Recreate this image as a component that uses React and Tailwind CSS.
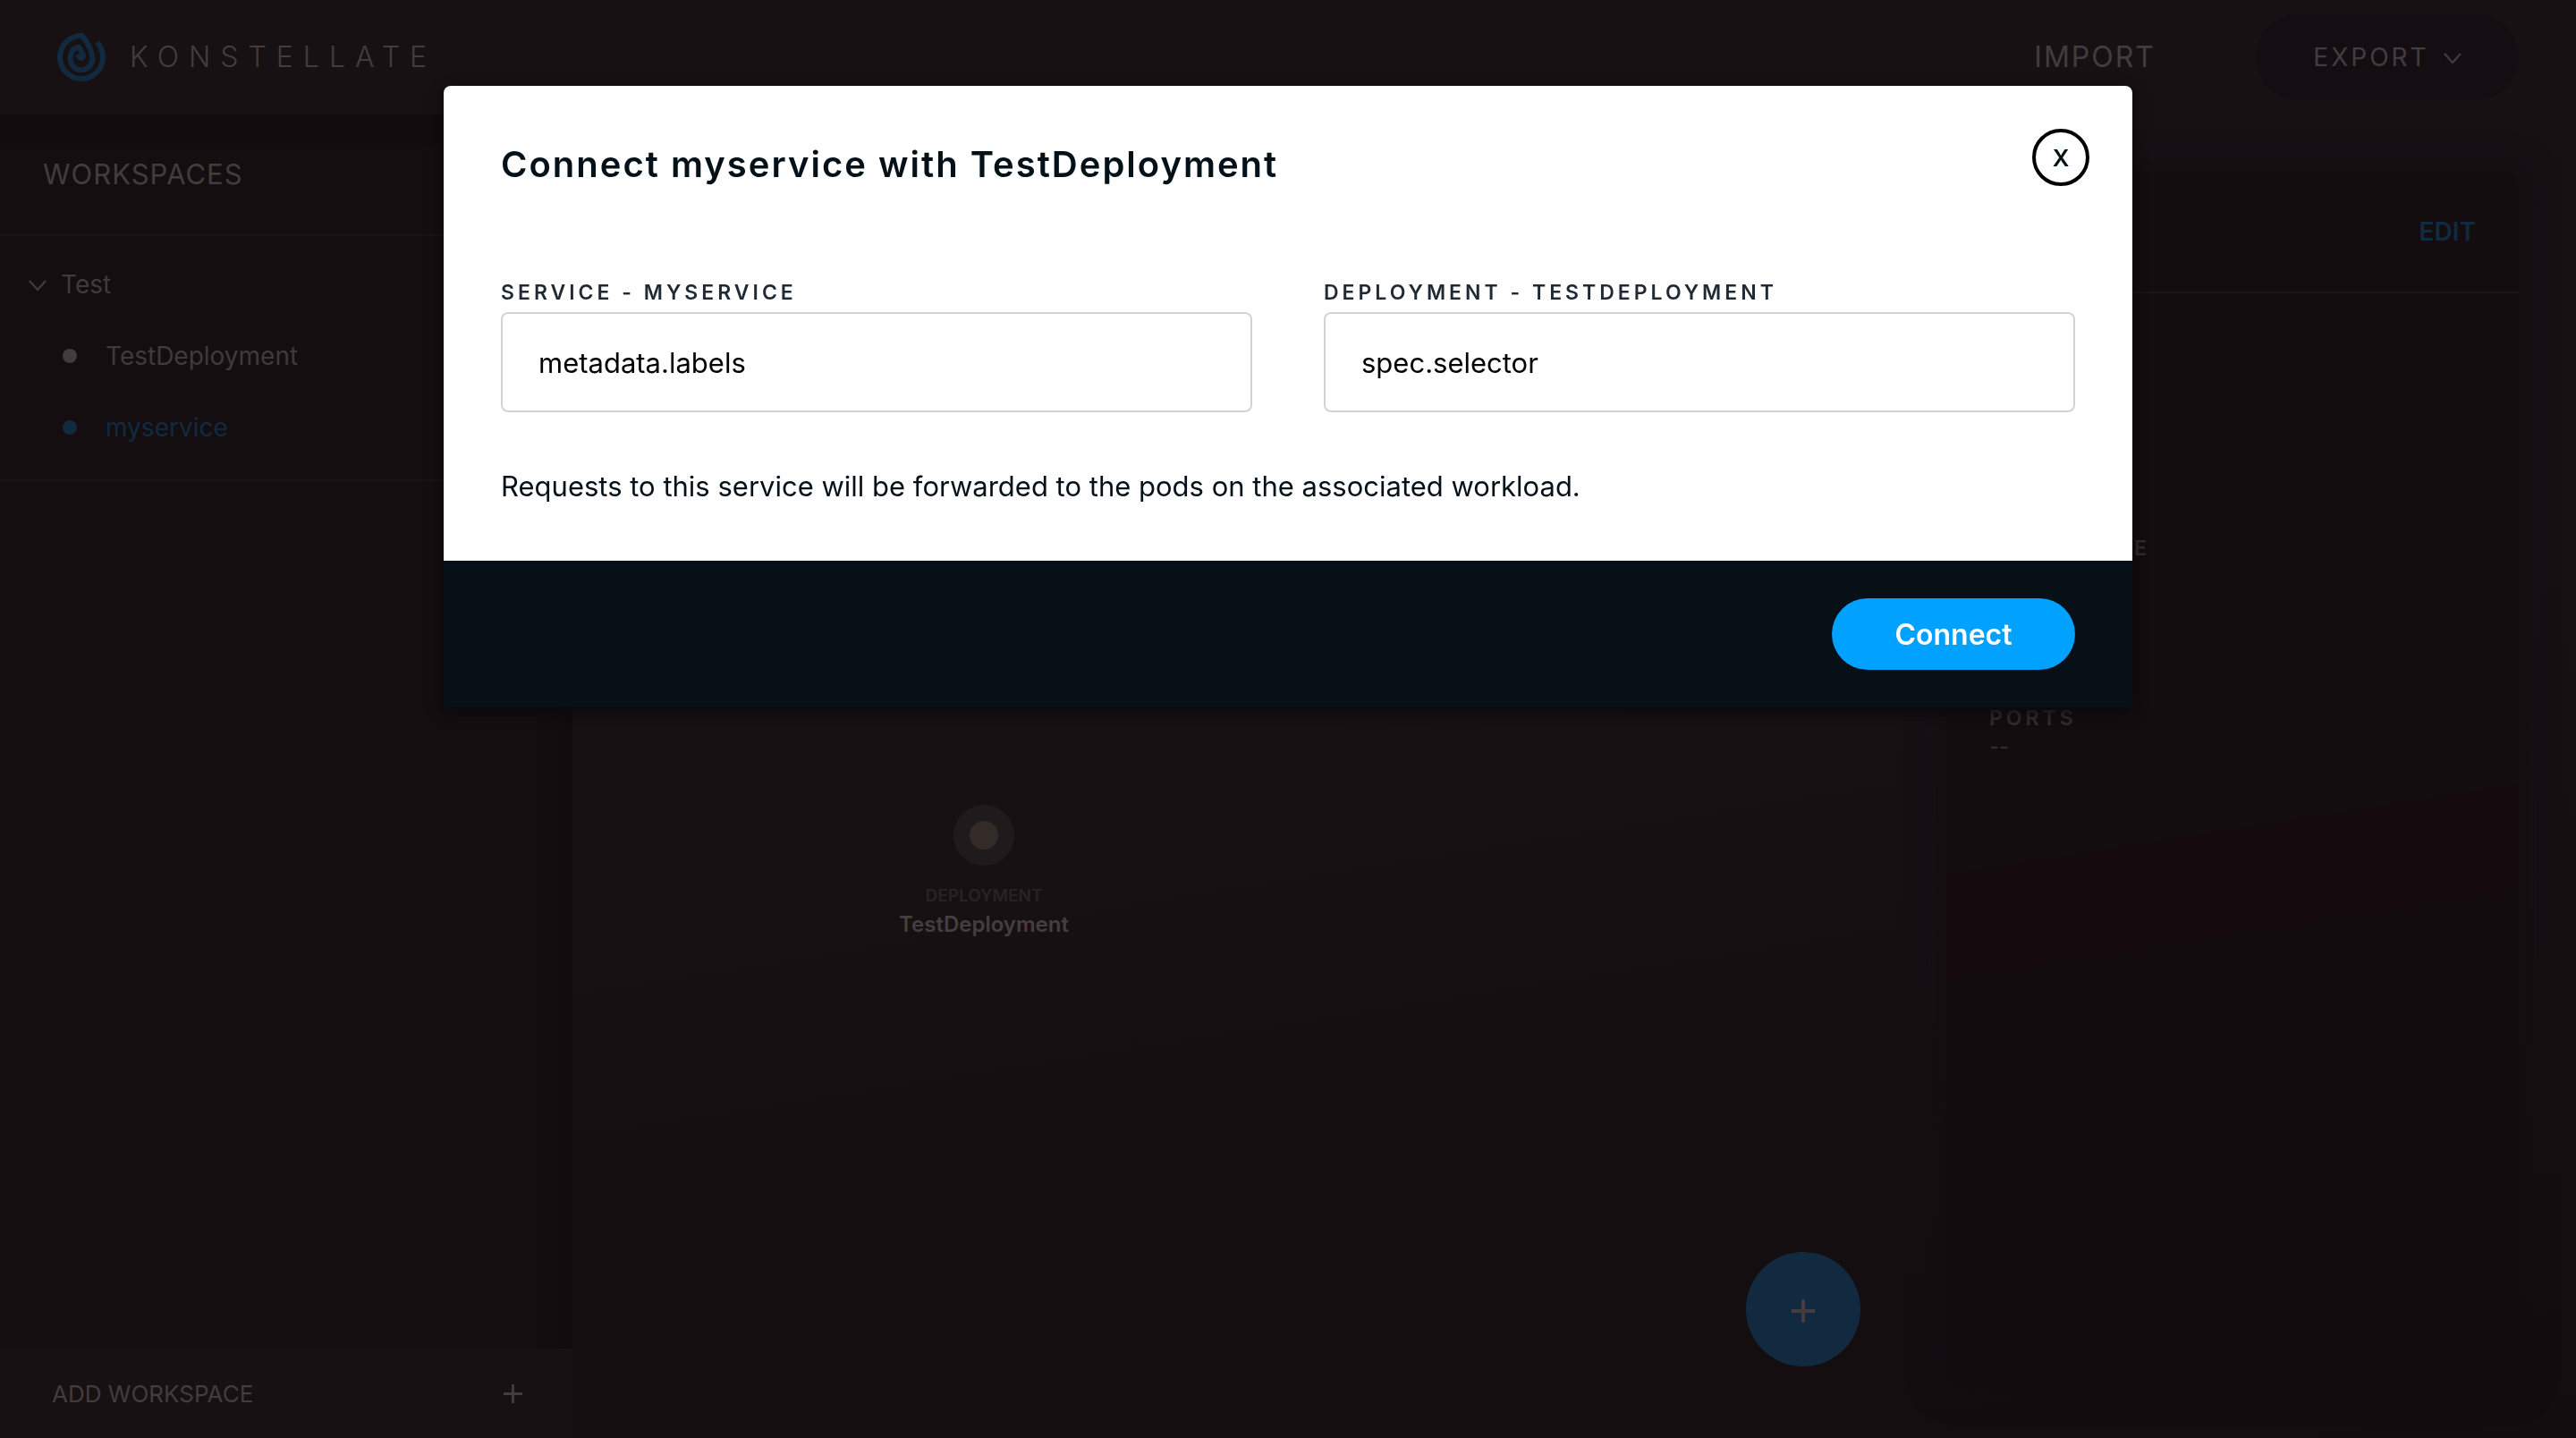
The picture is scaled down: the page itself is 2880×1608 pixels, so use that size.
import { useState } from "react";

function Logo() {
  return (
    <svg className="size-[54px] shrink-0" viewBox="45 51 162 162" fill="none" stroke="#122a40" strokeWidth="18" aria-hidden="true">
      <path d="M179 82 C191 96 198 113 198 132 A72 72 0 1 1 128 60 C139 72 160 104 162 130 A37 37 0 1 1 90 128 C91 112 101 102 117 98 C124 107 133 119 132 128 C130 137 120 137 113 123" />
    </svg>
  );
}

function Chevron() {
  return (
    <svg className="h-4 w-5 shrink-0" viewBox="0 0 20 16" fill="none" stroke="#413a3c" strokeWidth="2.5" aria-hidden="true">
      <path d="M1 4l9 10 9-10" />
    </svg>
  );
}

function Plus({ className, weight }) {
  return (
    <svg className={className} viewBox="0 0 26 26" fill="none" stroke="currentColor" strokeWidth={weight} aria-hidden="true">
      <path d="M13 0v26M0 13h26" />
    </svg>
  );
}

function TopBar() {
  return (
    <header className="flex h-32 items-center justify-between pr-16 pl-16 text-[#433c3e]">
      <div className="flex items-center gap-[27px]">
        <Logo />
        <span className="text-[32px] leading-10 font-light tracking-[11px]">KONSTELLATE</span>
      </div>
      <div className="flex items-center gap-28">
        <button type="button" className="text-[32px] leading-10 tracking-[2px]">IMPORT</button>
        <button type="button" className="flex h-24 w-[294px] items-center justify-center gap-4 rounded-full bg-[#140e12] text-[28px] tracking-[3px]">
          EXPORT
          <Chevron />
        </button>
      </div>
    </header>
  );
}

function SidebarItem({ name, active }) {
  return (
    <li>
      <a
        href="#"
        className={
          active
            ? "flex h-20 items-center gap-8 pl-[70px] text-[28px] text-[#122a40]"
            : "flex h-20 items-center gap-8 pl-[70px] text-[28px] text-[#403a3c]"
        }
      >
        <span className={active ? "size-4 rounded-full bg-[#122a40]" : "size-4 rounded-full bg-[#453a3e]"} />
        {name}
      </a>
    </li>
  );
}

function Sidebar() {
  return (
    <aside className="flex w-[640px] shrink-0 flex-col bg-[#140e11] shadow-[inset_-20px_0_30px_-16px_#110b0e]">
      <h2 className="flex h-[136px] items-center border-b-2 border-[#191316] bg-linear-to-b from-[#120c0f] from-25% to-[#140e11] to-25% pl-12 text-[31px] tracking-[1px] text-[#433c3e]">
        WORKSPACES
      </h2>
      <nav className="border-b-2 border-[#191316] pt-[14px] pb-[18px]">
        <button type="button" className="flex h-20 items-center gap-4 pl-8 text-[28px] text-[#403a3c]">
          <Chevron />
          Test
        </button>
        <ul>
          <SidebarItem name="TestDeployment" />
          <SidebarItem name="myservice" active />
        </ul>
      </nav>
      <button type="button" className="mt-auto flex h-[100px] items-center justify-between bg-[#171114] pr-14 pl-[58px] text-[26px] text-[#433c3e]">
        ADD WORKSPACE
        <Plus className="size-[21px]" weight="3.5" />
      </button>
    </aside>
  );
}

function Canvas() {
  return (
    <main className="relative flex-1">
      <div className="absolute top-[772px] left-[460px] flex -translate-x-1/2 flex-col items-center">
        <span className="flex size-[68px] items-center justify-center rounded-full bg-[#1f1a1c]">
          <span className="size-8 rounded-full bg-[#332b28]" />
        </span>
        <span className="mt-[18px] text-[19px] leading-8 font-semibold text-[#282225]">DEPLOYMENT</span>
        <span className="text-[24px] leading-8 font-semibold text-[#443e40]">TestDeployment</span>
      </div>
      <button
        type="button"
        aria-label="Add resource"
        className="absolute right-24 bottom-20 flex size-32 items-center justify-center rounded-full bg-[#122a40] pt-1 text-[#473b3f]"
      >
        <Plus className="size-[26px]" weight="4" />
      </button>
    </main>
  );
}

function Field({ label }) {
  return (
    <div>
      <dt className="text-[23px] leading-8 font-semibold tracking-[4px]">{label}</dt>
      <dd className="text-[24px] leading-8 font-medium">--</dd>
    </div>
  );
}

function DetailsPanel() {
  return (
    <section className="mt-16 mr-16 mb-[60px] w-[640px] shrink-0 rounded-2xl bg-[linear-gradient(171deg,#130d0f_54%,#150b0e_54%,#150b0e_62%,#120c0e_62%)] shadow-[0_0_40px_#130d10]">
      <div className="flex h-[136px] items-center justify-end border-b-2 border-[#1a1415] px-12">
        <a href="#" className="text-[28px] font-semibold text-[#122a40]">EDIT</a>
      </div>
      <dl className="flex flex-col gap-[126px] px-12 pt-[269px] text-[#312c2e]">
        <Field label="NAMESPACE" />
        <Field label="PORTS" />
      </dl>
    </section>
  );
}

function TextField({ id, label, initial }) {
  const [value, setValue] = useState(initial);
  return (
    <div className="flex flex-1 flex-col gap-2">
      <label htmlFor={id} className="text-[23px] leading-7 font-semibold tracking-[4px] text-[#1f2a35]">{label}</label>
      <input
        id={id}
        type="text"
        value={value}
        onChange={(e) => setValue(e.target.value)}
        className="h-28 w-full rounded-lg border-2 border-[#d3d3d3] bg-white px-10 text-[31px] text-black outline-none"
      />
    </div>
  );
}

function ConnectDialog() {
  return (
    <div className="fixed inset-0 flex items-start justify-center px-16 pt-24">
      <div role="dialog" aria-labelledby="dialog-title" className="w-full max-w-[1888px] overflow-hidden rounded-t-lg bg-white text-[#051119] shadow-[0_4px_16px_#0c0709]">
        <div className="flex items-start justify-between pt-12 pr-12 pl-16">
          <h1 id="dialog-title" className="pt-4 text-[40px] leading-[48px] font-semibold tracking-[2px]">Connect myservice with TestDeployment</h1>
          <button type="button" aria-label="Close" className="flex size-16 items-center justify-center rounded-full border-4 border-black pt-0.5 text-[26px] leading-8 font-semibold">
            X
          </button>
        </div>
        <div className="px-16 pt-[105px] pb-[63px]">
          <div className="flex gap-20">
            <TextField id="service" label="SERVICE - MYSERVICE" initial="metadata.labels" />
            <TextField id="deployment" label="DEPLOYMENT - TESTDEPLOYMENT" initial="spec.selector" />
          </div>
          <p className="pt-[63px] text-[31px] leading-10">Requests to this service will be forwarded to the pods on the associated workload.</p>
        </div>
        <div className="flex h-[164px] items-center justify-end bg-[#071017] px-16">
          <button type="button" className="h-20 w-[272px] rounded-full bg-[#00a1ff] pt-0.5 text-[32px] font-semibold text-white">Connect</button>
        </div>
      </div>
    </div>
  );
}

export default function App() {
  return (
    <div className="flex min-h-screen flex-col bg-linear-[171deg] from-[#171114] from-50% to-[#130d10] font-['Inter',sans-serif]">
      <TopBar />
      <div className="flex flex-1">
        <Sidebar />
        <Canvas />
        <DetailsPanel />
      </div>
      <ConnectDialog />
    </div>
  );
}
